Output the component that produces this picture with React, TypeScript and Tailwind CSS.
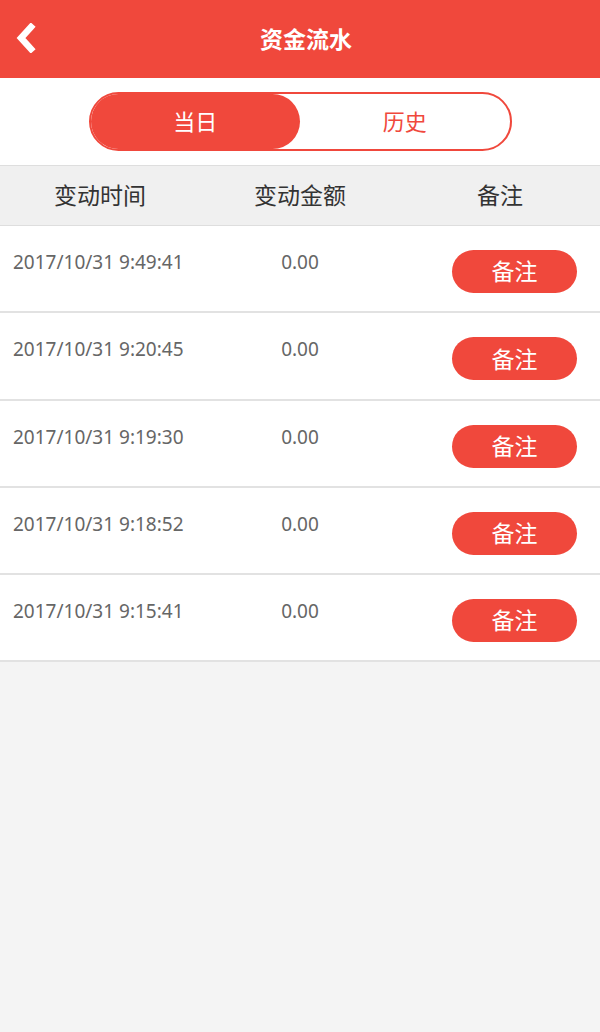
import React from "react";

const rows = [
  { time: "2017/10/31 9:49:41", amount: "0.00" },
  { time: "2017/10/31 9:20:45", amount: "0.00" },
  { time: "2017/10/31 9:19:30", amount: "0.00" },
  { time: "2017/10/31 9:18:52", amount: "0.00" },
  { time: "2017/10/31 9:15:41", amount: "0.00" },
];

export default function App() {
  return (
    <div
      className="min-h-[1032px] bg-[#f4f4f4]"
      style={{ fontFamily: '"Noto Sans", "Noto Sans CJK SC", sans-serif' }}
    >
      {/* top bar */}
      <div className="relative flex h-[78px] items-center justify-center bg-[#f0483c]">
        <button className="absolute left-[11px] top-[19px] p-1">
          <svg width="22" height="30" viewBox="0 0 22 30">
            <polyline
              points="16,4 6,15 16,26"
              fill="none"
              stroke="#fff"
              strokeWidth="6.5"
              strokeLinecap="square"
              strokeLinejoin="miter"
            />
          </svg>
        </button>
        <h1 className="pl-[12px] text-[23px] font-bold text-white">资金流水</h1>
      </div>

      {/* tabs */}
      <div className="flex h-[87px] items-center justify-center bg-white">
        <div className="flex h-[59px] w-[423px] rounded-full border-2 border-[#f0483c]">
          <div className="flex flex-1 items-center justify-center rounded-full bg-[#f0483c] text-[22px] text-white">
            当日
          </div>
          <div className="flex flex-1 items-center justify-center text-[22px] text-[#f0483c]">历史</div>
        </div>
      </div>

      {/* table header */}
      <div className="grid h-[61px] grid-cols-3 items-center border-y border-[#dedede] bg-[#f0f0f0] text-center text-[23px] text-[#333]">
        <div>变动时间</div>
        <div>变动金额</div>
        <div>备注</div>
      </div>

      {/* rows */}
      <div className="bg-white">
        {rows.map((r) => (
          <div key={r.time} className="grid h-[87.3px] grid-cols-3 items-start border-b-2 border-[#e2e2e2] pt-[22px]">
            <div className="pl-[13px] text-[19px] leading-7 text-[#666]">{r.time}</div>
            <div className="text-center text-[19px] leading-7 text-[#666]">{r.amount}</div>
            <div className="flex justify-end pr-[23px] pt-[2px]">
              <button className="h-[43px] w-[125px] rounded-full bg-[#f0483c] text-[23px] text-white">备注</button>
            </div>
          </div>
        ))}
      </div>
    </div>
  );
}
